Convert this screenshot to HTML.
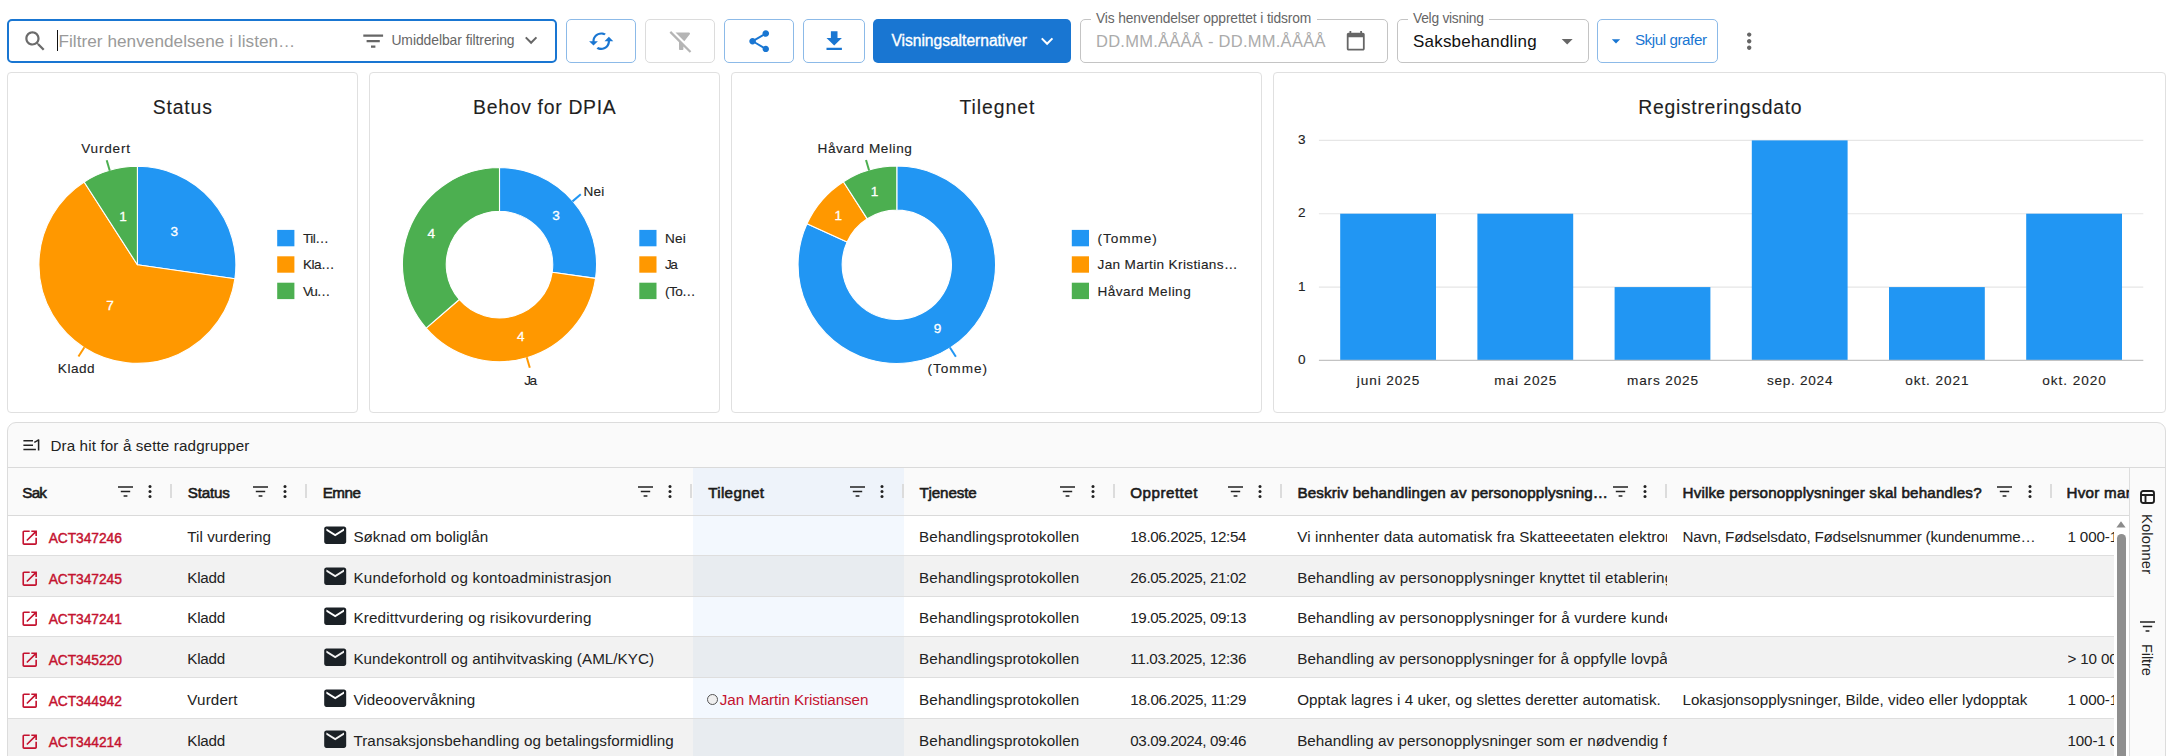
<!DOCTYPE html>
<html lang="no"><head><meta charset="utf-8"><title>Henvendelser</title><style>
html,body{margin:0;padding:0;background:#fff}
body{width:2182px;height:756px;overflow:hidden;position:relative;font-family:"Liberation Sans",sans-serif}
.t{position:absolute;white-space:nowrap;line-height:1;font-family:"Liberation Sans",sans-serif}
.i{position:absolute;display:block;overflow:visible}
.box{position:absolute}
.panel{position:absolute;box-sizing:border-box;border:1px solid #e0e0e0;border-radius:4px;background:#fff}
.grid{position:absolute;box-sizing:border-box;border:1px solid #dcdcdc;border-radius:9px;background:#fafafa}
.hl{position:absolute;height:1px;background:#dadada}
.rl{position:absolute;height:1px;background:#dedede}
.row{position:absolute}
</style></head>
<body>
<div class="toolbar">
<div class="box" style="left:7px;top:19px;width:550px;height:44px;border:2px solid #1976d2;border-radius:5px;box-sizing:border-box"></div>
<svg class="i" style="left:21.50px;top:28.00px" width="26.4" height="26.4" viewBox="0 0 24 24" ><path fill="#6b6b6b" d="M15.5 14h-.79l-.28-.27C15.41 12.59 16 11.11 16 9.5 16 5.91 13.09 3 9.5 3S3 5.91 3 9.5 5.91 16 9.5 16c1.61 0 3.09-.59 4.23-1.57l.27.28v.79l5 4.99L20.49 19l-4.99-5zm-6 0C7.01 14 5 11.99 5 9.5S7.01 5 9.5 5 14 7.01 14 9.5 11.99 14 9.5 14z"/></svg>
<div style="position:absolute;left:56.6px;top:30px;width:1px;height:21px;background:#111"></div>
<span class="t " style="left:58.50px;top:33px;font-size:17.2px;color:#9a9a9a;letter-spacing:0.028px;">Filtrer henvendelsene i listen…</span>
<svg class="i" style="left:359.60px;top:27.80px" width="26.4" height="26.4" viewBox="0 0 24 24" ><path fill="#666" d="M10 18h4v-2h-4v2zM3 6v2h18V6H3zm3 7h12v-2H6v2z"/></svg>
<span class="t " style="left:391.40px;top:34px;font-size:13.9px;color:#666;letter-spacing:-0.056px;">Umiddelbar filtrering</span>
<svg class="i" style="left:519.30px;top:28.30px" width="24.2" height="24.2" viewBox="0 0 24 24" ><path fill="#666" d="M16.59 8.59L12 13.17 7.41 8.59 6 10l6 6 6-6z"/></svg>
<div class="box" style="left:566px;top:19px;width:70px;height:44px;border:1px solid #8cbae8;border-radius:5px;box-sizing:border-box"></div>
<svg class="i" style="left:587.80px;top:28.00px" width="26.4" height="26.4" viewBox="0 0 24 24" ><path fill="#1976d2" d="M19 8l-4 4h3c0 3.31-2.69 6-6 6-1.01 0-1.97-.25-2.8-.7l-1.46 1.46C8.97 19.54 10.43 20 12 20c4.42 0 8-3.58 8-8h3l-4-4zM6 12c0-3.31 2.69-6 6-6 1.01 0 1.97.25 2.8.7l1.46-1.46C15.03 4.46 13.57 4 12 4c-4.42 0-8 3.58-8 8H1l4 4 4-4H6z"/></svg>
<div class="box" style="left:645px;top:19px;width:70px;height:44px;border:1px solid #dcdcdc;border-radius:5px;box-sizing:border-box"></div>
<svg class="i" style="left:667.50px;top:27.80px" width="26.4" height="26.4" viewBox="0 0 24 24" ><path fill="#b5b5b5" d="M19.79 5.61C20.3 4.95 19.83 4 19 4H6.83l7.97 7.97 4.99-6.36zM2.81 2.81L1.39 4.22 10 13v6c0 .55.45 1 1 1h2c.55 0 1-.45 1-1v-2.17l5.78 5.78 1.41-1.41L2.81 2.81z"/></svg>
<div class="box" style="left:724px;top:19px;width:70px;height:44px;border:1px solid #8cbae8;border-radius:5px;box-sizing:border-box"></div>
<svg class="i" style="left:745.90px;top:27.90px" width="26.4" height="26.4" viewBox="0 0 24 24" ><path fill="#1976d2" d="M18 16.08c-.76 0-1.44.3-1.96.77L8.91 12.7c.05-.23.09-.46.09-.7s-.04-.47-.09-.7l7.05-4.11c.54.5 1.25.81 2.04.81 1.66 0 3-1.34 3-3s-1.34-3-3-3-3 1.34-3 3c0 .24.04.47.09.7L8.04 9.81C7.5 9.31 6.79 9 6 9c-1.66 0-3 1.34-3 3s1.34 3 3 3c.79 0 1.5-.31 2.04-.81l7.12 4.16c-.05.21-.08.43-.08.65 0 1.61 1.31 2.92 2.92 2.92 1.61 0 2.92-1.31 2.92-2.92s-1.31-2.92-2.92-2.92z"/></svg>
<div class="box" style="left:803px;top:19px;width:62px;height:44px;border:1px solid #8cbae8;border-radius:5px;box-sizing:border-box"></div>
<svg class="i" style="left:820.90px;top:27.90px" width="26.4" height="26.4" viewBox="0 0 24 24" ><path fill="#1976d2" d="M19 9h-4V3H9v6H5l7 7 7-7zM5 18v2h14v-2H5z"/></svg>
<div class="box" style="left:873px;top:19px;width:198px;height:44px;background:#1976d2;border-radius:5px"></div>
<span class="t " style="left:891.40px;top:33px;font-size:15.6px;color:#fff;letter-spacing:-0.013px;-webkit-text-stroke:0.35px #fff;">Visningsalternativer</span>
<svg class="i" style="left:1035.30px;top:28.70px" width="24.2" height="24.2" viewBox="0 0 24 24" ><path fill="#fff" d="M16.59 8.59L12 13.17 7.41 8.59 6 10l6 6 6-6z"/></svg>
<div class="box" style="left:1080px;top:19px;width:308px;height:44px;border:1px solid #c4c4c4;border-radius:5px;box-sizing:border-box"></div>
<div class="box" style="left:1091px;top:17px;width:225.5px;height:4px;background:#fff"></div>
<span class="t " style="left:1096.00px;top:12px;font-size:13.8px;color:#666;letter-spacing:-0.128px;">Vis henvendelser opprettet i tidsrom</span>
<span class="t " style="left:1096.00px;top:33px;font-size:16.5px;color:#ababab;letter-spacing:0.261px;">DD.MM.ÅÅÅÅ - DD.MM.ÅÅÅÅ</span>
<svg class="i" style="left:1345.30px;top:29.60px" width="21.5" height="21.5" viewBox="0 0 24 24" ><path fill="#666" d="M20 3h-1V1h-2v2H7V1H5v2H4c-1.1 0-2 .9-2 2v16c0 1.1.9 2 2 2h16c1.1 0 2-.9 2-2V5c0-1.1-.9-2-2-2zm0 18H4V8h16v13z"/></svg>
<div class="box" style="left:1397px;top:19px;width:192px;height:44px;border:1px solid #c4c4c4;border-radius:5px;box-sizing:border-box"></div>
<div class="box" style="left:1408px;top:17px;width:80.5px;height:4px;background:#fff"></div>
<span class="t " style="left:1413.00px;top:12px;font-size:13.8px;color:#666;letter-spacing:-0.254px;">Velg visning</span>
<span class="t " style="left:1413.00px;top:33px;font-size:17.0px;color:#111;letter-spacing:0.201px;">Saksbehandling</span>
<svg class="i" style="left:1553.80px;top:27.80px" width="26.4" height="26.4" viewBox="0 0 24 24" ><path fill="#666" d="M7 10l5 5 5-5z"/></svg>
<div class="box" style="left:1597px;top:19px;width:121px;height:44px;border:1px solid #8cbae8;border-radius:5px;box-sizing:border-box"></div>
<svg class="i" style="left:1606.30px;top:30.80px" width="20" height="20" viewBox="0 0 24 24" ><path fill="#1976d2" d="M7 10l5 5 5-5z"/></svg>
<span class="t " style="left:1634.90px;top:32px;font-size:15.2px;color:#1976d2;letter-spacing:-0.431px;">Skjul grafer</span>
<svg class="i" style="left:1735.80px;top:27.90px" width="26.4" height="26.4" viewBox="0 0 24 24" ><path fill="#666" d="M12 8c1.1 0 2-.9 2-2s-.9-2-2-2-2 .9-2 2 .9 2 2 2zm0 2c-1.1 0-2 .9-2 2s.9 2 2 2 2-.9 2-2-.9-2-2-2zm0 6c-1.1 0-2 .9-2 2s.9 2 2 2 2-.9 2-2-.9-2-2-2z"/></svg>
</div>
<div class="panel" style="left:7px;top:72px;width:351px;height:341px"></div>
<div class="panel" style="left:369px;top:72px;width:351px;height:341px"></div>
<div class="panel" style="left:731px;top:72px;width:531px;height:341px"></div>
<div class="panel" style="left:1273px;top:72px;width:893px;height:341px"></div>
<svg class="charts" width="2182" height="420" viewBox="0 0 2182 420" style="position:absolute;left:0;top:0" font-family="Liberation Sans, sans-serif">
<text x="152.70" y="114.00" font-size="19.4" fill="#1f1f1f" stroke="#1f1f1f" stroke-width="0.12" text-anchor="start" textLength="59.2" lengthAdjust="spacing">Status</text>
<text x="473.10" y="114.00" font-size="19.4" fill="#1f1f1f" stroke="#1f1f1f" stroke-width="0.12" text-anchor="start" textLength="142.6" lengthAdjust="spacing">Behov for DPIA</text>
<text x="959.40" y="114.00" font-size="19.4" fill="#1f1f1f" stroke="#1f1f1f" stroke-width="0.12" text-anchor="start" textLength="75.0" lengthAdjust="spacing">Tilegnet</text>
<text x="1638.15" y="114.00" font-size="19.4" fill="#1f1f1f" stroke="#1f1f1f" stroke-width="0.12" text-anchor="start" textLength="163.5" lengthAdjust="spacing">Registreringsdato</text>
<path d="M137.4 264.8L137.40 166.30A98.5 98.5 0 0 1 234.90 278.82Z" fill="#2196f3" stroke="#fff" stroke-width="1.1" stroke-linejoin="round"/>
<path d="M137.4 264.8L234.90 278.82A98.5 98.5 0 1 1 84.15 181.94Z" fill="#ff9800" stroke="#fff" stroke-width="1.1" stroke-linejoin="round"/>
<path d="M137.4 264.8L84.15 181.94A98.5 98.5 0 0 1 137.40 166.30Z" fill="#4caf50" stroke="#fff" stroke-width="1.1" stroke-linejoin="round"/>
<line x1="84.42" y1="347.24" x2="78.47" y2="356.50" stroke="#ff9800" stroke-width="2"/>
<line x1="109.79" y1="170.77" x2="106.69" y2="160.22" stroke="#4caf50" stroke-width="2"/>
<text x="81.20" y="153.40" font-size="13.6" fill="#232323" stroke="#232323" stroke-width="0.12" text-anchor="start" textLength="48.8" lengthAdjust="spacing">Vurdert</text>
<text x="57.80" y="373.00" font-size="13.6" fill="#232323" stroke="#232323" stroke-width="0.12" text-anchor="start" textLength="36.8" lengthAdjust="spacing">Kladd</text>
<text x="174.30" y="236.20" font-size="13.6" fill="#fff" stroke="#fff" stroke-width="0.3" text-anchor="middle">3</text>
<text x="123.10" y="221.40" font-size="13.6" fill="#fff" stroke="#fff" stroke-width="0.3" text-anchor="middle">1</text>
<text x="110.00" y="310.10" font-size="13.6" fill="#fff" stroke="#fff" stroke-width="0.3" text-anchor="middle">7</text>
<path d="M499.50 167.55A97.05 97.05 0 0 1 595.56 278.41L552.21 272.18A53.25 53.25 0 0 0 499.50 211.35Z" fill="#2196f3" stroke="#fff" stroke-width="1.1" stroke-linejoin="round"/>
<path d="M595.56 278.41A97.05 97.05 0 0 1 426.15 328.15L459.26 299.47A53.25 53.25 0 0 0 552.21 272.18Z" fill="#ff9800" stroke="#fff" stroke-width="1.1" stroke-linejoin="round"/>
<path d="M426.15 328.15A97.05 97.05 0 0 1 499.50 167.55L499.50 211.35A53.25 53.25 0 0 0 459.26 299.47Z" fill="#4caf50" stroke="#fff" stroke-width="1.1" stroke-linejoin="round"/>
<line x1="572.47" y1="201.37" x2="580.78" y2="194.17" stroke="#2196f3" stroke-width="2"/>
<line x1="526.70" y1="357.24" x2="529.80" y2="367.79" stroke="#ff9800" stroke-width="2"/>
<text x="583.60" y="196.00" font-size="13.6" fill="#232323" stroke="#232323" stroke-width="0.12" text-anchor="start" textLength="20.7" lengthAdjust="spacing">Nei</text>
<text x="524.30" y="385.30" font-size="13.6" fill="#232323" stroke="#232323" stroke-width="0.12" text-anchor="start" textLength="12.7" lengthAdjust="spacing">Ja</text>
<text x="556.00" y="220.20" font-size="13.6" fill="#fff" stroke="#fff" stroke-width="0.3" text-anchor="middle">3</text>
<text x="520.70" y="341.20" font-size="13.6" fill="#fff" stroke="#fff" stroke-width="0.3" text-anchor="middle">4</text>
<text x="431.40" y="238.40" font-size="13.6" fill="#fff" stroke="#fff" stroke-width="0.3" text-anchor="middle">4</text>
<path d="M896.80 166.05A98.75 98.75 0 1 1 806.97 223.78L847.09 242.10A54.65 54.65 0 1 0 896.80 210.15Z" fill="#2196f3" stroke="#fff" stroke-width="1.1" stroke-linejoin="round"/>
<path d="M806.97 223.78A98.75 98.75 0 0 1 843.41 181.73L867.25 218.83A54.65 54.65 0 0 0 847.09 242.10Z" fill="#ff9800" stroke="#fff" stroke-width="1.1" stroke-linejoin="round"/>
<path d="M843.41 181.73A98.75 98.75 0 0 1 896.80 166.05L896.80 210.15A54.65 54.65 0 0 0 867.25 218.83Z" fill="#4caf50" stroke="#fff" stroke-width="1.1" stroke-linejoin="round"/>
<line x1="949.92" y1="347.45" x2="955.87" y2="356.71" stroke="#2196f3" stroke-width="2"/>
<line x1="869.12" y1="170.53" x2="866.02" y2="159.98" stroke="#4caf50" stroke-width="2"/>
<text x="817.50" y="153.20" font-size="13.6" fill="#232323" stroke="#232323" stroke-width="0.12" text-anchor="start" textLength="94.3" lengthAdjust="spacing">Håvard Meling</text>
<text x="927.50" y="372.90" font-size="13.6" fill="#232323" stroke="#232323" stroke-width="0.12" text-anchor="start" textLength="59.6" lengthAdjust="spacing">(Tomme)</text>
<text x="937.50" y="333.40" font-size="13.6" fill="#fff" stroke="#fff" stroke-width="0.3" text-anchor="middle">9</text>
<text x="838.20" y="219.80" font-size="13.6" fill="#fff" stroke="#fff" stroke-width="0.3" text-anchor="middle">1</text>
<text x="874.60" y="195.50" font-size="13.6" fill="#fff" stroke="#fff" stroke-width="0.3" text-anchor="middle">1</text>
<rect x="277.2" y="229.9" width="17.2" height="16.4" fill="#2196f3"/>
<text x="303.00" y="242.90" font-size="13.6" fill="#232323" stroke="#232323" stroke-width="0.12" text-anchor="start" textLength="25.8" lengthAdjust="spacing">Til…</text>
<rect x="277.2" y="256.3" width="17.2" height="16.4" fill="#ff9800"/>
<text x="303.00" y="269.30" font-size="13.6" fill="#232323" stroke="#232323" stroke-width="0.12" text-anchor="start" textLength="31.5" lengthAdjust="spacing">Kla…</text>
<rect x="277.2" y="282.7" width="17.2" height="16.4" fill="#4caf50"/>
<text x="303.00" y="295.70" font-size="13.6" fill="#232323" stroke="#232323" stroke-width="0.12" text-anchor="start" textLength="27.3" lengthAdjust="spacing">Vu…</text>
<rect x="639.3" y="229.9" width="17.2" height="16.4" fill="#2196f3"/>
<text x="665.00" y="242.90" font-size="13.6" fill="#232323" stroke="#232323" stroke-width="0.12" text-anchor="start" textLength="20.7" lengthAdjust="spacing">Nei</text>
<rect x="639.3" y="256.3" width="17.2" height="16.4" fill="#ff9800"/>
<text x="665.00" y="269.30" font-size="13.6" fill="#232323" stroke="#232323" stroke-width="0.12" text-anchor="start" textLength="12.7" lengthAdjust="spacing">Ja</text>
<rect x="639.3" y="282.7" width="17.2" height="16.4" fill="#4caf50"/>
<text x="665.00" y="295.70" font-size="13.6" fill="#232323" stroke="#232323" stroke-width="0.12" text-anchor="start" textLength="30.7" lengthAdjust="spacing">(To…</text>
<rect x="1071.8" y="229.9" width="17.2" height="16.4" fill="#2196f3"/>
<text x="1097.50" y="242.90" font-size="13.6" fill="#232323" stroke="#232323" stroke-width="0.12" text-anchor="start" textLength="59.3" lengthAdjust="spacing">(Tomme)</text>
<rect x="1071.8" y="256.3" width="17.2" height="16.4" fill="#ff9800"/>
<text x="1097.50" y="269.30" font-size="13.6" fill="#232323" stroke="#232323" stroke-width="0.12" text-anchor="start" textLength="140.0" lengthAdjust="spacing">Jan Martin Kristians…</text>
<rect x="1071.8" y="282.7" width="17.2" height="16.4" fill="#4caf50"/>
<text x="1097.50" y="295.70" font-size="13.6" fill="#232323" stroke="#232323" stroke-width="0.12" text-anchor="start" textLength="93.2" lengthAdjust="spacing">Håvard Meling</text>
<line x1="1318.9" y1="140.4" x2="2143.3" y2="140.4" stroke="#e6e6e6" stroke-width="1.1"/>
<line x1="1318.9" y1="213.7" x2="2143.3" y2="213.7" stroke="#e6e6e6" stroke-width="1.1"/>
<line x1="1318.9" y1="287.1" x2="2143.3" y2="287.1" stroke="#e6e6e6" stroke-width="1.1"/>
<rect x="1340.2" y="213.7" width="95.8" height="146.7" fill="#2196f3"/>
<rect x="1477.4" y="213.7" width="95.8" height="146.7" fill="#2196f3"/>
<rect x="1614.6" y="287.1" width="95.8" height="73.3" fill="#2196f3"/>
<rect x="1751.8" y="140.4" width="95.8" height="220.0" fill="#2196f3"/>
<rect x="1889.0" y="287.1" width="95.8" height="73.3" fill="#2196f3"/>
<rect x="2026.2" y="213.7" width="95.8" height="146.7" fill="#2196f3"/>
<line x1="1318.9" y1="360.4" x2="2143.3" y2="360.4" stroke="#c3c3c3" stroke-width="1.1"/>
<text x="1305.50" y="364.00" font-size="13.6" fill="#232323" stroke="#232323" stroke-width="0.12" text-anchor="end">0</text>
<text x="1305.50" y="290.67" font-size="13.6" fill="#232323" stroke="#232323" stroke-width="0.12" text-anchor="end">1</text>
<text x="1305.50" y="217.34" font-size="13.6" fill="#232323" stroke="#232323" stroke-width="0.12" text-anchor="end">2</text>
<text x="1305.50" y="144.01" font-size="13.6" fill="#232323" stroke="#232323" stroke-width="0.12" text-anchor="end">3</text>
<text x="1356.85" y="384.80" font-size="13.6" fill="#232323" stroke="#232323" stroke-width="0.12" text-anchor="start" textLength="62.5" lengthAdjust="spacing">juni 2025</text>
<text x="1494.30" y="384.80" font-size="13.6" fill="#232323" stroke="#232323" stroke-width="0.12" text-anchor="start" textLength="62.0" lengthAdjust="spacing">mai 2025</text>
<text x="1627.00" y="384.80" font-size="13.6" fill="#232323" stroke="#232323" stroke-width="0.12" text-anchor="start" textLength="71.0" lengthAdjust="spacing">mars 2025</text>
<text x="1766.95" y="384.80" font-size="13.6" fill="#232323" stroke="#232323" stroke-width="0.12" text-anchor="start" textLength="65.5" lengthAdjust="spacing">sep. 2024</text>
<text x="1905.15" y="384.80" font-size="13.6" fill="#232323" stroke="#232323" stroke-width="0.12" text-anchor="start" textLength="63.5" lengthAdjust="spacing">okt. 2021</text>
<text x="2042.35" y="384.80" font-size="13.6" fill="#232323" stroke="#232323" stroke-width="0.12" text-anchor="start" textLength="63.5" lengthAdjust="spacing">okt. 2020</text>
</svg>
<div class="grid" style="left:7px;top:422px;width:2159px;height:360px"></div>
<div class="hl" style="left:8px;top:467px;width:2157px"></div>
<div class="row" style="left:8px;top:516px;width:2106px;height:39px;background:#fff"></div>
<div class="row" style="left:8px;top:556px;width:2106px;height:40px;background:#f2f2f2"></div>
<div class="row" style="left:8px;top:597px;width:2106px;height:39px;background:#fff"></div>
<div class="row" style="left:8px;top:637px;width:2106px;height:40px;background:#f2f2f2"></div>
<div class="row" style="left:8px;top:678px;width:2106px;height:40px;background:#fff"></div>
<div class="row" style="left:8px;top:719px;width:2106px;height:40px;background:#f2f2f2"></div>
<div class="box" style="left:2114px;top:516px;width:15.5px;height:240px;background:#fff"></div>
<div class="box" style="left:692.8px;top:468px;width:211px;height:47.5px;background:#eef3fa"></div>
<div class="box" style="left:692.8px;top:516px;width:211px;height:39px;background:#f3f8fe"></div>
<div class="box" style="left:692.8px;top:556px;width:211px;height:40px;background:#e8ecf0"></div>
<div class="box" style="left:692.8px;top:597px;width:211px;height:39px;background:#f3f8fe"></div>
<div class="box" style="left:692.8px;top:637px;width:211px;height:40px;background:#e8ecf0"></div>
<div class="box" style="left:692.8px;top:678px;width:211px;height:40px;background:#f3f8fe"></div>
<div class="box" style="left:692.8px;top:719px;width:211px;height:40px;background:#e8ecf0"></div>
<div class="hl" style="left:8px;top:515px;width:2121.5px"></div>
<svg class="i" style="left:22.5px;top:438px" width="17" height="14" viewBox="0 0 17 14"><g stroke="#222" stroke-width="1.55" fill="none"><path d="M0.4 2.7H10M0.4 7.2H10M0.4 11.5H12.9"/><path d="M15.6 1.5V12.5"/><path d="M15.8 1.9L11.3 4.4" stroke-width="1.5"/></g></svg>
<span class="t " style="left:50.40px;top:438px;font-size:15.2px;color:#222;letter-spacing:0.134px;">Dra hit for å sette radgrupper</span>
<div class="hdrclip" style="position:absolute;left:8px;top:468px;width:2121.5px;height:47px;overflow:hidden">
</div>
<span class="t " style="left:22.30px;top:485px;font-size:15.2px;color:#1b1b1b;letter-spacing:-0.764px;-webkit-text-stroke:0.6px #1b1b1b;">Sak</span>
<svg class="i" style="left:117.80px;top:486.00px" width="15" height="11" viewBox="0 0 15 11"><g stroke="#222" stroke-width="1.5"><path d="M0 1H15M2.8 5.4H12.2M5.6 9.9H9.4"/></g></svg>
<svg class="i" style="left:148.40px;top:485.40px" width="4" height="13" viewBox="0 0 4 13"><g fill="#222"><circle cx="2" cy="1.6" r="1.5"/><circle cx="2" cy="6.5" r="1.5"/><circle cx="2" cy="11.4" r="1.5"/></g></svg>
<div class="box" style="left:170.2px;top:484.3px;width:2px;height:13.4px;background:#dcdcdc"></div>
<span class="t " style="left:187.70px;top:485px;font-size:15.2px;color:#1b1b1b;letter-spacing:-0.165px;-webkit-text-stroke:0.6px #1b1b1b;">Status</span>
<svg class="i" style="left:252.80px;top:486.00px" width="15" height="11" viewBox="0 0 15 11"><g stroke="#222" stroke-width="1.5"><path d="M0 1H15M2.8 5.4H12.2M5.6 9.9H9.4"/></g></svg>
<svg class="i" style="left:283.40px;top:485.40px" width="4" height="13" viewBox="0 0 4 13"><g fill="#222"><circle cx="2" cy="1.6" r="1.5"/><circle cx="2" cy="6.5" r="1.5"/><circle cx="2" cy="11.4" r="1.5"/></g></svg>
<div class="box" style="left:305.2px;top:484.3px;width:2px;height:13.4px;background:#dcdcdc"></div>
<span class="t " style="left:322.70px;top:485px;font-size:15.2px;color:#1b1b1b;letter-spacing:-0.502px;-webkit-text-stroke:0.6px #1b1b1b;">Emne</span>
<svg class="i" style="left:637.80px;top:486.00px" width="15" height="11" viewBox="0 0 15 11"><g stroke="#222" stroke-width="1.5"><path d="M0 1H15M2.8 5.4H12.2M5.6 9.9H9.4"/></g></svg>
<svg class="i" style="left:668.40px;top:485.40px" width="4" height="13" viewBox="0 0 4 13"><g fill="#222"><circle cx="2" cy="1.6" r="1.5"/><circle cx="2" cy="6.5" r="1.5"/><circle cx="2" cy="11.4" r="1.5"/></g></svg>
<div class="box" style="left:690.2px;top:484.3px;width:2px;height:13.4px;background:#dcdcdc"></div>
<span class="t " style="left:708.20px;top:485px;font-size:15.2px;color:#1b1b1b;letter-spacing:0.323px;-webkit-text-stroke:0.6px #1b1b1b;">Tilegnet</span>
<svg class="i" style="left:849.50px;top:486.00px" width="15" height="11" viewBox="0 0 15 11"><g stroke="#222" stroke-width="1.5"><path d="M0 1H15M2.8 5.4H12.2M5.6 9.9H9.4"/></g></svg>
<svg class="i" style="left:880.10px;top:485.40px" width="4" height="13" viewBox="0 0 4 13"><g fill="#222"><circle cx="2" cy="1.6" r="1.5"/><circle cx="2" cy="6.5" r="1.5"/><circle cx="2" cy="11.4" r="1.5"/></g></svg>
<div class="box" style="left:901.9px;top:484.3px;width:2px;height:13.4px;background:#dcdcdc"></div>
<span class="t " style="left:919.40px;top:485px;font-size:15.2px;color:#1b1b1b;letter-spacing:-0.137px;-webkit-text-stroke:0.6px #1b1b1b;">Tjeneste</span>
<svg class="i" style="left:1060.40px;top:486.00px" width="15" height="11" viewBox="0 0 15 11"><g stroke="#222" stroke-width="1.5"><path d="M0 1H15M2.8 5.4H12.2M5.6 9.9H9.4"/></g></svg>
<svg class="i" style="left:1091.00px;top:485.40px" width="4" height="13" viewBox="0 0 4 13"><g fill="#222"><circle cx="2" cy="1.6" r="1.5"/><circle cx="2" cy="6.5" r="1.5"/><circle cx="2" cy="11.4" r="1.5"/></g></svg>
<div class="box" style="left:1112.8px;top:484.3px;width:2px;height:13.4px;background:#dcdcdc"></div>
<span class="t " style="left:1130.30px;top:485px;font-size:15.2px;color:#1b1b1b;letter-spacing:0.481px;-webkit-text-stroke:0.6px #1b1b1b;">Opprettet</span>
<svg class="i" style="left:1227.50px;top:486.00px" width="15" height="11" viewBox="0 0 15 11"><g stroke="#222" stroke-width="1.5"><path d="M0 1H15M2.8 5.4H12.2M5.6 9.9H9.4"/></g></svg>
<svg class="i" style="left:1258.10px;top:485.40px" width="4" height="13" viewBox="0 0 4 13"><g fill="#222"><circle cx="2" cy="1.6" r="1.5"/><circle cx="2" cy="6.5" r="1.5"/><circle cx="2" cy="11.4" r="1.5"/></g></svg>
<div class="box" style="left:1279.9px;top:484.3px;width:2px;height:13.4px;background:#dcdcdc"></div>
<span class="t " style="left:1297.40px;top:485px;font-size:15.2px;color:#1b1b1b;letter-spacing:0.168px;-webkit-text-stroke:0.6px #1b1b1b;">Beskriv behandlingen av personopplysning…</span>
<svg class="i" style="left:1612.60px;top:486.00px" width="15" height="11" viewBox="0 0 15 11"><g stroke="#222" stroke-width="1.5"><path d="M0 1H15M2.8 5.4H12.2M5.6 9.9H9.4"/></g></svg>
<svg class="i" style="left:1643.20px;top:485.40px" width="4" height="13" viewBox="0 0 4 13"><g fill="#222"><circle cx="2" cy="1.6" r="1.5"/><circle cx="2" cy="6.5" r="1.5"/><circle cx="2" cy="11.4" r="1.5"/></g></svg>
<div class="box" style="left:1665.0px;top:484.3px;width:2px;height:13.4px;background:#dcdcdc"></div>
<span class="t " style="left:1682.50px;top:485px;font-size:15.2px;color:#1b1b1b;letter-spacing:0.174px;-webkit-text-stroke:0.6px #1b1b1b;">Hvilke personopplysninger skal behandles?</span>
<svg class="i" style="left:1997.30px;top:486.00px" width="15" height="11" viewBox="0 0 15 11"><g stroke="#222" stroke-width="1.5"><path d="M0 1H15M2.8 5.4H12.2M5.6 9.9H9.4"/></g></svg>
<svg class="i" style="left:2027.90px;top:485.40px" width="4" height="13" viewBox="0 0 4 13"><g fill="#222"><circle cx="2" cy="1.6" r="1.5"/><circle cx="2" cy="6.5" r="1.5"/><circle cx="2" cy="11.4" r="1.5"/></g></svg>
<div class="box" style="left:2049.7px;top:484.3px;width:2px;height:13.4px;background:#dcdcdc"></div>
<div style="position:absolute;left:2066.5px;top:478px;width:62.8px;height:30px;overflow:hidden"><span class="t" style="left:0;top:7px;font-size:15.2px;color:#1b1b1b;-webkit-text-stroke:0.6px #1b1b1b;letter-spacing:0.25px">Hvor mange registrerte</span></div>
<svg class="i" style="left:20.10px;top:527.90px" width="19.4" height="19.4" viewBox="0 0 24 24" ><path fill="#c4122f" d="M19 19H5V5h7V3H5c-1.11 0-2 .9-2 2v14c0 1.1.89 2 2 2h14c1.1 0 2-.9 2-2v-7h-2v7zM14 3v2h3.59l-9.83 9.83 1.41 1.41L19 6.41V10h2V3h-7z"/></svg>
<span class="t " style="left:48.70px;top:532px;font-size:13.8px;color:#c4122f;letter-spacing:-0.061px;-webkit-text-stroke:0.42px #c4122f;">ACT347246</span>
<span class="t " style="left:187.30px;top:529px;font-size:15.2px;color:#222;letter-spacing:0.056px;">Til vurdering</span>
<svg class="i" style="left:322.10px;top:522.00px" width="26.4" height="26.4" viewBox="0 0 24 24" ><path fill="#1b2126" d="M20 4H4c-1.1 0-1.99.9-1.99 2L2 18c0 1.1.9 2 2 2h16c1.1 0 2-.9 2-2V6c0-1.1-.9-2-2-2zm0 4l-8 5-8-5V6l8 5 8-5v2z"/></svg>
<span class="t " style="left:353.40px;top:529px;font-size:15.2px;color:#222;letter-spacing:0.031px;">Søknad om boliglån</span>
<span class="t " style="left:919.10px;top:529px;font-size:15.2px;color:#222;letter-spacing:0.108px;">Behandlingsprotokollen</span>
<span class="t " style="left:1130.30px;top:529px;font-size:15.2px;color:#222;letter-spacing:-0.398px;">18.06.2025, 12:54</span>
<div style="position:absolute;left:1297.2px;top:516px;width:369.8px;height:39px;overflow:hidden"><span class="t" style="left:0;top:13px;font-size:15.2px;color:#222;letter-spacing:0.111px">Vi innhenter data automatisk fra Skatteeetaten elektronisk</span></div>
<span class="t " style="left:1682.40px;top:529px;font-size:15.2px;color:#222;letter-spacing:-0.202px;">Navn, Fødselsdato, Fødselsnummer (kundenumme…</span>
<div style="position:absolute;left:2067.5px;top:516px;width:46.5px;height:39px;overflow:hidden"><span class="t" style="left:0;top:13px;font-size:15.2px;color:#222;letter-spacing:-0.15px">1 000-10 000</span></div>
<svg class="i" style="left:20.10px;top:568.90px" width="19.4" height="19.4" viewBox="0 0 24 24" ><path fill="#c4122f" d="M19 19H5V5h7V3H5c-1.11 0-2 .9-2 2v14c0 1.1.89 2 2 2h14c1.1 0 2-.9 2-2v-7h-2v7zM14 3v2h3.59l-9.83 9.83 1.41 1.41L19 6.41V10h2V3h-7z"/></svg>
<span class="t " style="left:48.70px;top:573px;font-size:13.8px;color:#c4122f;letter-spacing:-0.061px;-webkit-text-stroke:0.42px #c4122f;">ACT347245</span>
<span class="t " style="left:187.30px;top:570px;font-size:15.2px;color:#222;letter-spacing:-0.215px;">Kladd</span>
<svg class="i" style="left:322.10px;top:563.00px" width="26.4" height="26.4" viewBox="0 0 24 24" ><path fill="#1b2126" d="M20 4H4c-1.1 0-1.99.9-1.99 2L2 18c0 1.1.9 2 2 2h16c1.1 0 2-.9 2-2V6c0-1.1-.9-2-2-2zm0 4l-8 5-8-5V6l8 5 8-5v2z"/></svg>
<span class="t " style="left:353.40px;top:570px;font-size:15.2px;color:#222;letter-spacing:0.218px;">Kundeforhold og kontoadministrasjon</span>
<span class="t " style="left:919.10px;top:570px;font-size:15.2px;color:#222;letter-spacing:0.108px;">Behandlingsprotokollen</span>
<span class="t " style="left:1130.30px;top:570px;font-size:15.2px;color:#222;letter-spacing:-0.398px;">26.05.2025, 21:02</span>
<div style="position:absolute;left:1297.2px;top:556px;width:369.8px;height:40px;overflow:hidden"><span class="t" style="left:0;top:14px;font-size:15.2px;color:#222;letter-spacing:0.145px">Behandling av personopplysninger knyttet til etablering</span></div>
<svg class="i" style="left:20.10px;top:608.90px" width="19.4" height="19.4" viewBox="0 0 24 24" ><path fill="#c4122f" d="M19 19H5V5h7V3H5c-1.11 0-2 .9-2 2v14c0 1.1.89 2 2 2h14c1.1 0 2-.9 2-2v-7h-2v7zM14 3v2h3.59l-9.83 9.83 1.41 1.41L19 6.41V10h2V3h-7z"/></svg>
<span class="t " style="left:48.70px;top:613px;font-size:13.8px;color:#c4122f;letter-spacing:-0.061px;-webkit-text-stroke:0.42px #c4122f;">ACT347241</span>
<span class="t " style="left:187.30px;top:610px;font-size:15.2px;color:#222;letter-spacing:-0.215px;">Kladd</span>
<svg class="i" style="left:322.10px;top:603.00px" width="26.4" height="26.4" viewBox="0 0 24 24" ><path fill="#1b2126" d="M20 4H4c-1.1 0-1.99.9-1.99 2L2 18c0 1.1.9 2 2 2h16c1.1 0 2-.9 2-2V6c0-1.1-.9-2-2-2zm0 4l-8 5-8-5V6l8 5 8-5v2z"/></svg>
<span class="t " style="left:353.40px;top:610px;font-size:15.2px;color:#222;letter-spacing:0.197px;">Kredittvurdering og risikovurdering</span>
<span class="t " style="left:919.10px;top:610px;font-size:15.2px;color:#222;letter-spacing:0.108px;">Behandlingsprotokollen</span>
<span class="t " style="left:1130.30px;top:610px;font-size:15.2px;color:#222;letter-spacing:-0.398px;">19.05.2025, 09:13</span>
<div style="position:absolute;left:1297.2px;top:597px;width:369.8px;height:39px;overflow:hidden"><span class="t" style="left:0;top:13px;font-size:15.2px;color:#222;letter-spacing:0.132px">Behandling av personopplysninger for å vurdere kundens</span></div>
<svg class="i" style="left:20.10px;top:649.90px" width="19.4" height="19.4" viewBox="0 0 24 24" ><path fill="#c4122f" d="M19 19H5V5h7V3H5c-1.11 0-2 .9-2 2v14c0 1.1.89 2 2 2h14c1.1 0 2-.9 2-2v-7h-2v7zM14 3v2h3.59l-9.83 9.83 1.41 1.41L19 6.41V10h2V3h-7z"/></svg>
<span class="t " style="left:48.70px;top:654px;font-size:13.8px;color:#c4122f;letter-spacing:-0.061px;-webkit-text-stroke:0.42px #c4122f;">ACT345220</span>
<span class="t " style="left:187.30px;top:651px;font-size:15.2px;color:#222;letter-spacing:-0.215px;">Kladd</span>
<svg class="i" style="left:322.10px;top:644.00px" width="26.4" height="26.4" viewBox="0 0 24 24" ><path fill="#1b2126" d="M20 4H4c-1.1 0-1.99.9-1.99 2L2 18c0 1.1.9 2 2 2h16c1.1 0 2-.9 2-2V6c0-1.1-.9-2-2-2zm0 4l-8 5-8-5V6l8 5 8-5v2z"/></svg>
<span class="t " style="left:353.40px;top:651px;font-size:15.2px;color:#222;letter-spacing:0.043px;">Kundekontroll og antihvitvasking (AML/KYC)</span>
<span class="t " style="left:919.10px;top:651px;font-size:15.2px;color:#222;letter-spacing:0.108px;">Behandlingsprotokollen</span>
<span class="t " style="left:1130.30px;top:651px;font-size:15.2px;color:#222;letter-spacing:-0.331px;">11.03.2025, 12:36</span>
<div style="position:absolute;left:1297.2px;top:637px;width:369.8px;height:40px;overflow:hidden"><span class="t" style="left:0;top:14px;font-size:15.2px;color:#222;letter-spacing:0.113px">Behandling av personopplysninger for å oppfylle lovpålagte</span></div>
<div style="position:absolute;left:2067.5px;top:637px;width:46.5px;height:40px;overflow:hidden"><span class="t" style="left:0;top:14px;font-size:15.2px;color:#222;letter-spacing:-0.15px">&gt; 10 000</span></div>
<svg class="i" style="left:20.10px;top:690.90px" width="19.4" height="19.4" viewBox="0 0 24 24" ><path fill="#c4122f" d="M19 19H5V5h7V3H5c-1.11 0-2 .9-2 2v14c0 1.1.89 2 2 2h14c1.1 0 2-.9 2-2v-7h-2v7zM14 3v2h3.59l-9.83 9.83 1.41 1.41L19 6.41V10h2V3h-7z"/></svg>
<span class="t " style="left:48.70px;top:695px;font-size:13.8px;color:#c4122f;letter-spacing:-0.061px;-webkit-text-stroke:0.42px #c4122f;">ACT344942</span>
<span class="t " style="left:187.30px;top:692px;font-size:15.2px;color:#222;letter-spacing:0.160px;">Vurdert</span>
<svg class="i" style="left:322.10px;top:685.00px" width="26.4" height="26.4" viewBox="0 0 24 24" ><path fill="#1b2126" d="M20 4H4c-1.1 0-1.99.9-1.99 2L2 18c0 1.1.9 2 2 2h16c1.1 0 2-.9 2-2V6c0-1.1-.9-2-2-2zm0 4l-8 5-8-5V6l8 5 8-5v2z"/></svg>
<span class="t " style="left:353.40px;top:692px;font-size:15.2px;color:#222;letter-spacing:0.090px;">Videoovervåkning</span>
<div class="box" style="left:706.9px;top:693.60px;width:11.3px;height:11.3px;border:1.4px solid #555;background:#efefef;border-radius:50%;box-sizing:border-box"></div>
<span class="t " style="left:719.80px;top:692px;font-size:15.2px;color:#c4122f;letter-spacing:-0.081px;">Jan Martin Kristiansen</span>
<span class="t " style="left:919.10px;top:692px;font-size:15.2px;color:#222;letter-spacing:0.108px;">Behandlingsprotokollen</span>
<span class="t " style="left:1130.30px;top:692px;font-size:15.2px;color:#222;letter-spacing:-0.331px;">18.06.2025, 11:29</span>
<div style="position:absolute;left:1297.2px;top:678px;width:369.8px;height:40px;overflow:hidden"><span class="t" style="left:0;top:14px;font-size:15.2px;color:#222;letter-spacing:0.074px">Opptak lagres i 4 uker, og slettes deretter automatisk.</span></div>
<span class="t " style="left:1682.40px;top:692px;font-size:15.2px;color:#222;letter-spacing:0.044px;">Lokasjonsopplysninger, Bilde, video eller lydopptak</span>
<div style="position:absolute;left:2067.5px;top:678px;width:46.5px;height:40px;overflow:hidden"><span class="t" style="left:0;top:14px;font-size:15.2px;color:#222;letter-spacing:-0.15px">1 000-10 000</span></div>
<svg class="i" style="left:20.10px;top:731.90px" width="19.4" height="19.4" viewBox="0 0 24 24" ><path fill="#c4122f" d="M19 19H5V5h7V3H5c-1.11 0-2 .9-2 2v14c0 1.1.89 2 2 2h14c1.1 0 2-.9 2-2v-7h-2v7zM14 3v2h3.59l-9.83 9.83 1.41 1.41L19 6.41V10h2V3h-7z"/></svg>
<span class="t " style="left:48.70px;top:736px;font-size:13.8px;color:#c4122f;letter-spacing:-0.061px;-webkit-text-stroke:0.42px #c4122f;">ACT344214</span>
<span class="t " style="left:187.30px;top:733px;font-size:15.2px;color:#222;letter-spacing:-0.215px;">Kladd</span>
<svg class="i" style="left:322.10px;top:726.00px" width="26.4" height="26.4" viewBox="0 0 24 24" ><path fill="#1b2126" d="M20 4H4c-1.1 0-1.99.9-1.99 2L2 18c0 1.1.9 2 2 2h16c1.1 0 2-.9 2-2V6c0-1.1-.9-2-2-2zm0 4l-8 5-8-5V6l8 5 8-5v2z"/></svg>
<span class="t " style="left:353.40px;top:733px;font-size:15.2px;color:#222;letter-spacing:0.096px;">Transaksjonsbehandling og betalingsformidling</span>
<span class="t " style="left:919.10px;top:733px;font-size:15.2px;color:#222;letter-spacing:0.108px;">Behandlingsprotokollen</span>
<span class="t " style="left:1130.30px;top:733px;font-size:15.2px;color:#222;letter-spacing:-0.398px;">03.09.2024, 09:46</span>
<div style="position:absolute;left:1297.2px;top:719px;width:369.8px;height:40px;overflow:hidden"><span class="t" style="left:0;top:14px;font-size:15.2px;color:#222;letter-spacing:0.053px">Behandling av personopplysninger som er nødvendig for</span></div>
<div style="position:absolute;left:2067.5px;top:719px;width:46.5px;height:40px;overflow:hidden"><span class="t" style="left:0;top:14px;font-size:15.2px;color:#222;letter-spacing:-0.15px">100-1 000</span></div>
<div class="rl" style="left:8px;top:555px;width:2106px"></div>
<div class="rl" style="left:8px;top:596px;width:2106px"></div>
<div class="rl" style="left:8px;top:636px;width:2106px"></div>
<div class="rl" style="left:8px;top:677px;width:2106px"></div>
<div class="rl" style="left:8px;top:718px;width:2106px"></div>
<div class="rl" style="left:8px;top:759px;width:2106px"></div>
<svg class="i" style="left:2116.2px;top:520.8px" width="10" height="7" viewBox="0 0 10 7"><path d="M5 0.3L9.6 6.6H0.4z" fill="#8b8b8b"/></svg>
<div class="box" style="left:2117px;top:533.5px;width:8.5px;height:260px;background:#8f8f8f;border-radius:4.5px"></div>
<div class="box" style="left:2129.3px;top:468px;width:35.7px;height:300px;background:#fafafa;border-left:1px solid #ddd;box-sizing:border-box"></div>
<svg class="i" style="left:2140px;top:490.3px" width="15" height="14" viewBox="0 0 15 14"><g stroke="#1f1f1f" stroke-width="1.9" fill="none"><rect x="1" y="1" width="13" height="12" rx="2.2"/><path d="M1 5H14M5.5 5V13"/></g></svg>
<span class="t" style="left:2154.2px;top:514.4px;font-size:14.6px;color:#222;letter-spacing:0.232px;transform-origin:0 0;transform:rotate(90deg);line-height:1">Kolonner</span>
<svg class="i" style="left:2140px;top:620.8px" width="15" height="11" viewBox="0 0 15 11"><g stroke="#222" stroke-width="1.5"><path d="M0 1H15M2.8 5.4H12.2M5.6 9.9H9.4"/></g></svg>
<span class="t" style="left:2154.2px;top:644.2px;font-size:14.6px;color:#222;letter-spacing:-0.124px;transform-origin:0 0;transform:rotate(90deg);line-height:1">Filtre</span>
</body></html>
